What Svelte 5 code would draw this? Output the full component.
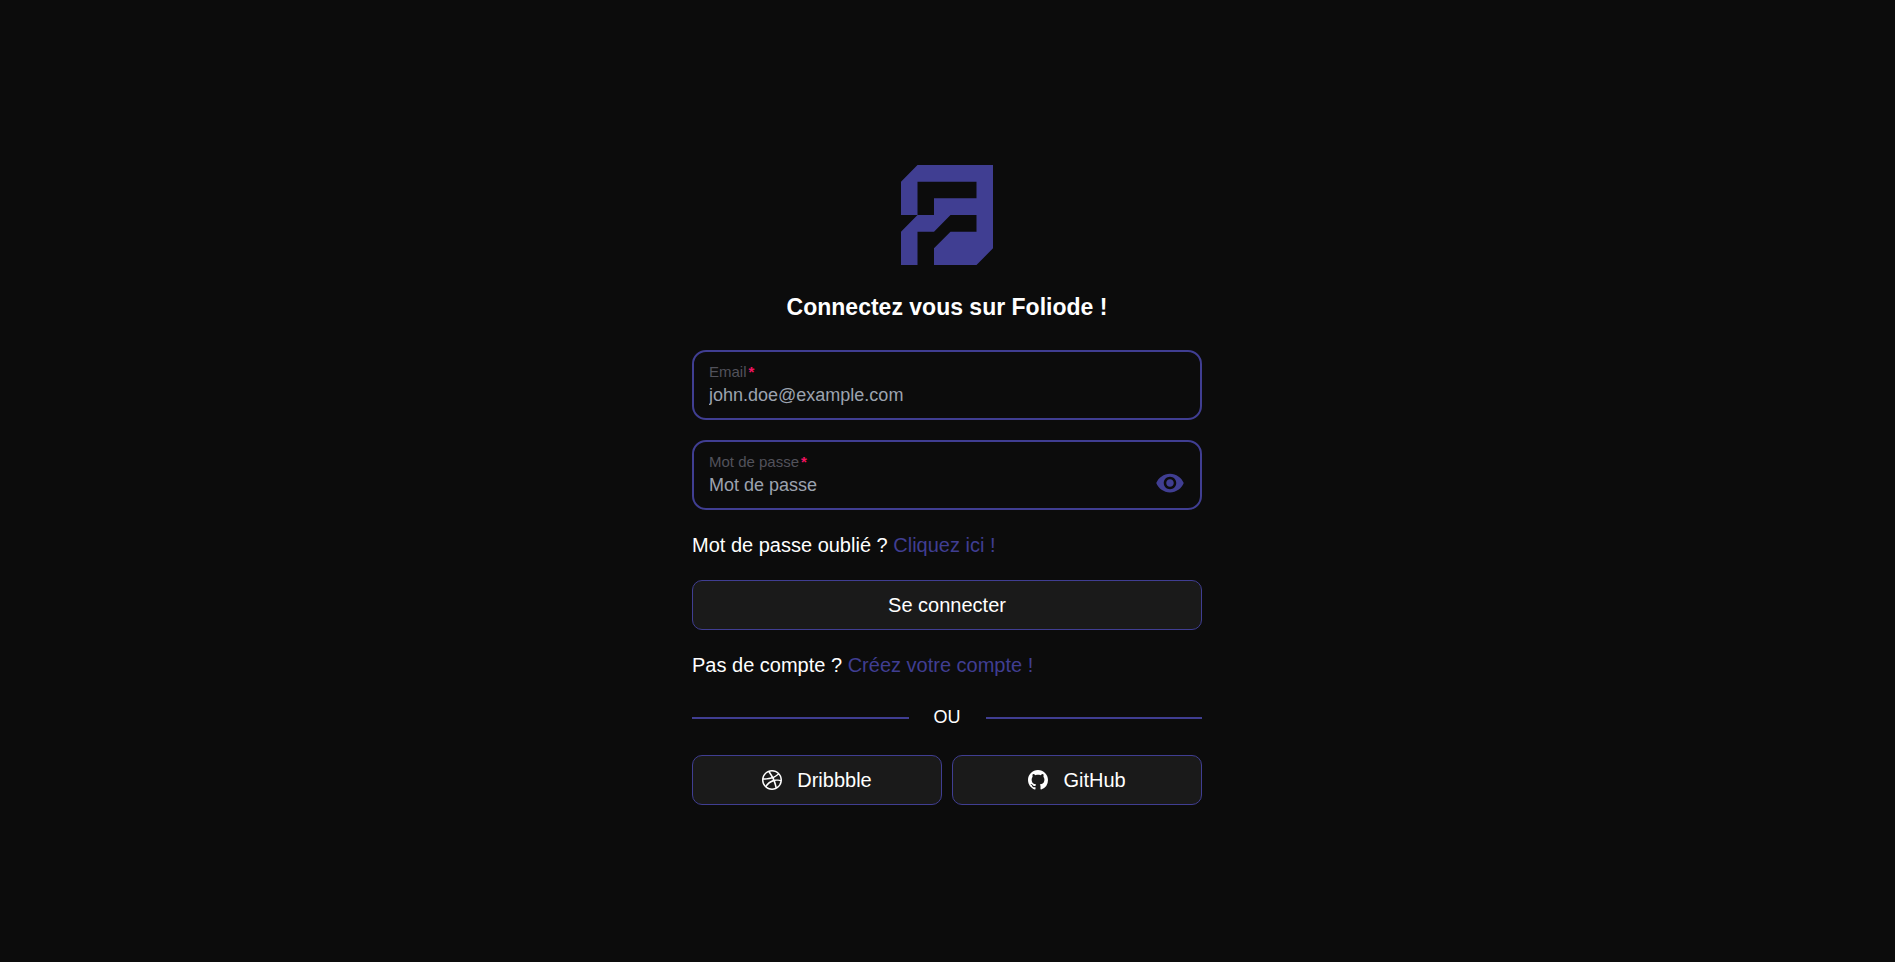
<script>
  let email = $state('');
  let password = $state('');
  let visible = $state(false);
</script>

<main>
  <form class="login" onsubmit={(e) => e.preventDefault()}>
    <svg class="logo" viewBox="0 0 92 100" role="img" aria-label="Foliode">
      <path d="M16.5 0H92V83.3L75.5 100H33V83.3L49.5 66.7H75.5V50H49.5L33 66.7H16.5V100H0V66.7L16.5 50H33V33.3H75.5V16.7H16.5V50H0V16.7Z" />
    </svg>

    <h1>Connectez vous sur Foliode !</h1>

    <div class="field">
      <div class="entry">
        <label for="email">Email</label>
        <input id="email" type="email" placeholder="john.doe@example.com" bind:value={email} />
      </div>
    </div>

    <div class="field">
      <div class="entry">
        <label for="password">Mot de passe</label>
        <input id="password" type={visible ? 'text' : 'password'} placeholder="Mot de passe" bind:value={password} />
      </div>
      <button class="reveal" type="button" aria-label="Afficher le mot de passe" onclick={() => (visible = !visible)}>
        <svg viewBox="0 0 24 24" aria-hidden="true">
          <path d="M12 4.5C7 4.5 2.73 7.61 1 12c1.73 4.39 6 7.5 11 7.5s9.27-3.11 11-7.5c-1.73-4.39-6-7.5-11-7.5zM12 17c-2.76 0-5-2.24-5-5s2.24-5 5-5 5 2.24 5 5-2.24 5-5 5zm0-8c-1.66 0-3 1.34-3 3s1.34 3 3 3 3-1.34 3-3-1.34-3-3-3z" />
        </svg>
      </button>
    </div>

    <p>Mot de passe oublié ? <a href="#reset">Cliquez ici !</a></p>

    <button class="action" type="submit">Se connecter</button>

    <p>Pas de compte ? <a href="#signup">Créez votre compte !</a></p>

    <div class="divider"><span>OU</span></div>

    <div class="providers">
      <button class="action" type="button">
        <svg viewBox="0 0 16 16" aria-hidden="true">
          <path fill-rule="evenodd" d="M8 0C3.584 0 0 3.584 0 8s3.584 8 8 8c4.408 0 8-3.584 8-8s-3.592-8-8-8zm5.284 3.688a6.802 6.802 0 0 1 1.545 4.251c-.226-.043-2.482-.503-4.755-.217-.052-.112-.096-.234-.148-.355-.139-.33-.295-.668-.451-.99 2.516-1.023 3.662-2.498 3.81-2.69zM8 1.18c1.735 0 3.323.65 4.53 1.718-.122.174-1.155 1.553-3.584 2.464-1.12-2.056-2.36-3.74-2.551-4A6.95 6.95 0 0 1 8 1.18zm-2.907.642A43.123 43.123 0 0 1 7.627 5.77c-3.193.85-6.013.833-6.317.833a6.865 6.865 0 0 1 3.783-4.78zM1.163 8.01V7.8c.295.01 3.61.053 7.02-.971.199.381.381.772.555 1.162l-.27.078c-3.522 1.137-5.396 4.243-5.553 4.504a6.817 6.817 0 0 1-1.752-4.564zM8 14.837a6.785 6.785 0 0 1-4.19-1.44c.12-.252 1.509-2.924 5.361-4.269.018-.009.026-.009.044-.017a28.246 28.246 0 0 1 1.457 5.18A6.722 6.722 0 0 1 8 14.837zm3.81-1.171c-.07-.417-.435-2.412-1.328-4.868 2.143-.338 4.017.217 4.251.295a6.774 6.774 0 0 1-2.924 4.573z" />
        </svg>
        Dribbble
      </button>
      <button class="action" type="button">
        <svg viewBox="0 0 16 16" aria-hidden="true">
          <path d="M8 0C3.58 0 0 3.58 0 8c0 3.54 2.29 6.53 5.47 7.59.4.07.55-.17.55-.38 0-.19-.01-.82-.01-1.49-2.01.37-2.53-.49-2.69-.94-.09-.23-.48-.94-.82-1.13-.28-.15-.68-.52-.01-.53.63-.01 1.08.58 1.23.82.72 1.21 1.87.87 2.33.66.07-.52.28-.87.51-1.07-1.78-.2-3.64-.89-3.64-3.95 0-.87.31-1.59.82-2.15-.08-.2-.36-1.02.08-2.12 0 0 .67-.21 2.2.82.64-.18 1.32-.27 2-.27.68 0 1.36.09 2 .27 1.53-1.04 2.2-.82 2.2-.82.44 1.1.16 1.92.08 2.12.51.56.82 1.27.82 2.15 0 3.07-1.87 3.75-3.65 3.95.29.25.54.73.54 1.48 0 1.07-.01 1.93-.01 2.2 0 .21.15.46.55.38A8.012 8.012 0 0 0 16 8c0-4.42-3.58-8-8-8z" />
        </svg>
        GitHub
      </button>
    </div>
  </form>
</main>

<style>
  :global(body) {
    margin: 0;
    background: #0c0c0c;
  }

  main {
    --accent: #403e92;
    box-sizing: border-box;
    min-height: 100vh;
    padding: 8px 17px 0 16px;
    display: flex;
    align-items: center;
    justify-content: center;
    color: #fff;
    font-family: "Liberation Sans", Arial, sans-serif;
    font-size: 20px;
    line-height: 30px;
  }

  .login {
    width: 100%;
    max-width: 510px;
    display: flex;
    flex-direction: column;
    gap: 20px;
  }

  .logo {
    height: 100px;
    align-self: center;
    fill: var(--accent);
  }

  h1 {
    margin: 0;
    padding: 7px 0 8px;
    font-size: 23px;
    font-weight: 700;
    text-align: center;
  }

  p {
    margin: 0;
  }

  a {
    color: var(--accent);
    text-decoration: none;
  }

  .field {
    display: flex;
    align-items: flex-end;
    padding: 10px 15px;
    border: 2px solid var(--accent);
    border-radius: 14px;
  }

  .entry {
    flex: 1;
    min-width: 0;
    display: flex;
    flex-direction: column;
  }

  label {
    color: #52525b;
    font-size: 15px;
    line-height: 20px;
  }

  label::after {
    content: "*";
    margin-left: 2px;
    color: #f31260;
    font-weight: 700;
  }

  input {
    width: 100%;
    height: 26px;
    padding: 0;
    border: 0;
    outline: 0;
    background: none;
    color: #fff;
    font: inherit;
    font-size: 18px;
    line-height: 26px;
  }

  input::placeholder {
    color: #9ca3af;
    opacity: 1;
  }

  button {
    font: inherit;
    color: inherit;
    cursor: pointer;
  }

  .reveal {
    display: flex;
    padding: 0;
    border: 0;
    background: none;
  }

  .reveal svg {
    width: 30px;
    height: 30px;
    fill: var(--accent);
  }

  .action {
    box-sizing: border-box;
    height: 50px;
    padding: 0 16px;
    display: flex;
    align-items: center;
    justify-content: center;
    gap: 15px;
    border: 1px solid var(--accent);
    border-radius: 10px;
    background: #1a1a1a;
  }

  .action svg {
    width: 20px;
    height: 20px;
    fill: #fff;
  }

  .divider {
    display: flex;
    align-items: center;
    gap: 25px;
    font-size: 18px;
    line-height: 35px;
  }

  .divider::before,
  .divider::after {
    content: "";
    flex: 1;
    height: 2px;
    background: var(--accent);
  }

  .providers {
    display: grid;
    grid-template-columns: 1fr 1fr;
    gap: 10px;
  }
</style>
